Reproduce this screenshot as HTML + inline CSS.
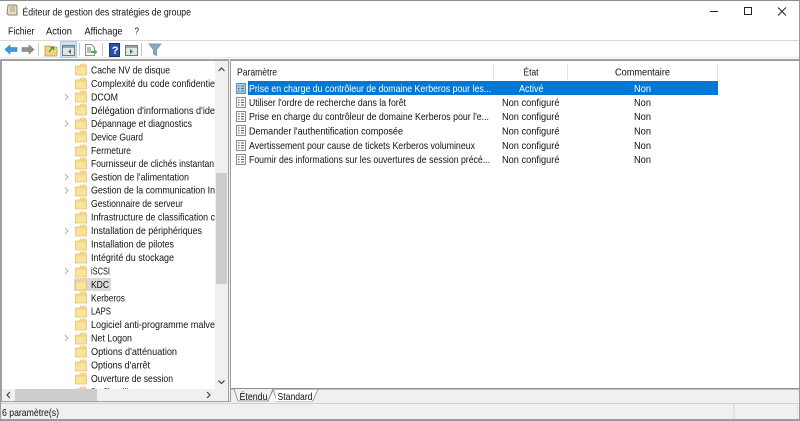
<!DOCTYPE html>
<html><head><meta charset="utf-8"><style>
html,body{margin:0;padding:0;width:800px;height:421px;overflow:hidden;background:#f0f0f0}
svg{display:block}
text{font-family:"Liberation Sans",sans-serif;font-size:10.2px;fill:#111}
</style></head><body>
<svg width="800" height="421" viewBox="0 0 800 421" xmlns="http://www.w3.org/2000/svg">
<defs>
<g id="f"><path d="M5 2.500l1-1.500h4.500l.5 1.500v1H5z" fill="#f9e4a8" stroke="#e3c679" stroke-width=".8"/><rect x="0.500" y="3" width="11" height="9" fill="#f8dc8c" stroke="#e3c679" stroke-width=".8"/><rect x="1.500" y="5" width="9" height="6.500" fill="#fbe39c"/></g>
<g id="d"><rect x="0.500" y="0.500" width="9" height="10" fill="#fff" stroke="#8a8a8a"/><path d="M2 3h1.500M2 5.500h1.500M2 8h1.500M5 3h3M5 5.500h3M5 8h3" stroke="#555" stroke-width="1"/></g>
<path id="c" d="M0 0l3 3l-3 3" fill="none" stroke="#b0b0b0" stroke-width="1"/>
<clipPath id="t"><rect x="2" y="62" width="213" height="327"/></clipPath>
</defs>
<rect width="800" height="421" fill="#fff"/>
<rect x="0" y="0" width="800" height="1" fill="#8c8c8c"/>

<!-- title -->
<path d="M8 5h8l1 1v9H9l-2-1z" fill="#e8dfc4" stroke="#8a8370"/><path d="M10 7h5M10 9h5M10 11h5" stroke="#a89f80"/>
<text x="22.500" y="15.500" textLength="168.500" lengthAdjust="spacingAndGlyphs">Éditeur de gestion des stratégies de groupe</text>
<rect x="710" y="11" width="8" height="1" fill="#222"/>
<rect x="744.500" y="7.500" width="7" height="7" fill="none" stroke="#222"/>
<path d="M778 7.500l8 8M786 7.500l-8 8" stroke="#222" stroke-width="1"/>

<!-- menu -->
<text x="8" y="34.500" textLength="26.500" lengthAdjust="spacingAndGlyphs">Fichier</text>
<text x="46" y="34.500" textLength="26" lengthAdjust="spacingAndGlyphs">Action</text>
<text x="84.500" y="34.500" textLength="38" lengthAdjust="spacingAndGlyphs">Affichage</text>
<text x="134.500" y="34.500" textLength="4.500" lengthAdjust="spacingAndGlyphs">?</text>

<!-- toolbar -->
<rect x="0" y="40" width="800" height="1" fill="#d9d9d9"/>
<rect x="0" y="41" width="800" height="18" fill="#fff"/>
<rect x="0" y="57" width="800" height="1" fill="#e8e8e8"/>
<rect x="0" y="59" width="800" height="2" fill="#a0a0a0"/>
<path d="M5 49.500l5-4.500v2.500h7v4h-7v2.500z" fill="#3f9ae0" stroke="#2277c0" stroke-width=".6"/>
<path d="M34 49.500l-5-4.500v2.500h-7v4h7v2.500z" fill="#8e8e8e" stroke="#777" stroke-width=".6"/>
<rect x="38" y="43" width="1" height="13" fill="#c8c8c8"/>
<path d="M45 46h5l1 1h6v9H45z" fill="#f3d27c" stroke="#b89a50" stroke-width=".8"/>
<path d="M49 52l4-5m-2.500 0h3v3" fill="none" stroke="#2f9a2f" stroke-width="1.300"/>
<rect x="60.500" y="41.500" width="16" height="16" fill="#cce4f7" stroke="#a8d0ee"/>
<rect x="62.500" y="45.500" width="12" height="10" fill="#e6e6e6" stroke="#777"/>
<rect x="63" y="46" width="11" height="2" fill="#90a8bc"/>
<path d="M71 49v5l-3-2.500z" fill="#2d8a3e"/>
<rect x="79" y="43" width="1" height="13" fill="#c8c8c8"/>
<path d="M85.500 44.500h6l3 3v8h-9z" fill="#fafafa" stroke="#909090"/>
<path d="M87 48h4M87 50h4M87 52h4" stroke="#777"/>
<path d="M91 51h3v-2l3.500 3-3.500 3v-2h-3z" fill="#4cb04c"/>
<rect x="102" y="43" width="1" height="13" fill="#c8c8c8"/>
<rect x="109.500" y="43.500" width="10" height="13" fill="#2a4fa8" stroke="#1c3478"/>
<text x="111.700" y="54" style="font-size:11px;font-weight:bold;fill:#fff">?</text>
<rect x="125.500" y="45.500" width="12" height="10" fill="#e6e6e6" stroke="#777"/>
<rect x="126" y="46" width="11" height="2" fill="#90a8bc"/>
<path d="M130 49v5l3-2.500z" fill="#2d8a3e"/>
<rect x="141" y="43" width="1" height="13" fill="#c8c8c8"/>
<path d="M149 44h12l-4.500 5.500v6l-3-1.500v-4.500z" fill="#8ea9bd" stroke="#6b8698" stroke-width=".7"/>

<!-- left panel -->
<rect x="0" y="61" width="2" height="343" fill="#a0a0a0"/>
<rect x="2" y="61" width="226" height="340" fill="#fff"/>
<rect x="228" y="59" width="3" height="345" fill="#f0f0f0"/>
<rect x="228" y="59" width="1" height="345" fill="#a0a0a0"/>
<rect x="230" y="59" width="1" height="345" fill="#a0a0a0"/>

<rect x="74" y="278" width="37" height="13" fill="#d9d9d9"/>

<g clip-path="url(#t)">
<use href="#f" x="75" y="63"/><text x="91" y="73.500" textLength="79" lengthAdjust="spacingAndGlyphs">Cache NV de disque</text>
<use href="#f" x="75" y="77"/><text x="91" y="87" textLength="124" lengthAdjust="spacingAndGlyphs">Complexité du code confidentie</text>
<use href="#f" x="75" y="90"/><text x="91" y="100.500" textLength="27" lengthAdjust="spacingAndGlyphs">DCOM</text>
<use href="#f" x="75" y="103"/><text x="91" y="114" textLength="124" lengthAdjust="spacingAndGlyphs">Délégation d'informations d'ide</text>
<use href="#f" x="75" y="117"/><text x="91" y="127" textLength="101" lengthAdjust="spacingAndGlyphs">Dépannage et diagnostics</text>
<use href="#f" x="75" y="130"/><text x="91" y="140.500" textLength="52" lengthAdjust="spacingAndGlyphs">Device Guard</text>
<use href="#f" x="75" y="144"/><text x="91" y="154" textLength="40" lengthAdjust="spacingAndGlyphs">Fermeture</text>
<use href="#f" x="75" y="157"/><text x="91" y="167" textLength="123" lengthAdjust="spacingAndGlyphs">Fournisseur de clichés instantan</text>
<use href="#f" x="75" y="170"/><text x="91" y="180.500" textLength="98" lengthAdjust="spacingAndGlyphs">Gestion de l'alimentation</text>
<use href="#f" x="75" y="184"/><text x="91" y="193.500" textLength="124" lengthAdjust="spacingAndGlyphs">Gestion de la communication In</text>
<use href="#f" x="75" y="197"/><text x="91" y="207" textLength="92" lengthAdjust="spacingAndGlyphs">Gestionnaire de serveur</text>
<use href="#f" x="75" y="211"/><text x="91" y="220.500" textLength="124" lengthAdjust="spacingAndGlyphs">Infrastructure de classification c</text>
<use href="#f" x="75" y="224"/><text x="91" y="234" textLength="111" lengthAdjust="spacingAndGlyphs">Installation de périphériques</text>
<use href="#f" x="75" y="238"/><text x="91" y="247.500" textLength="83" lengthAdjust="spacingAndGlyphs">Installation de pilotes</text>
<use href="#f" x="75" y="251"/><text x="91" y="261" textLength="83" lengthAdjust="spacingAndGlyphs">Intégrité du stockage</text>
<use href="#f" x="75" y="265"/><text x="91" y="274.500" textLength="19" lengthAdjust="spacingAndGlyphs">iSCSI</text>
<use href="#f" x="75" y="278"/><text x="91" y="288" textLength="18" lengthAdjust="spacingAndGlyphs">KDC</text>
<use href="#f" x="75" y="291"/><text x="91" y="301.500" textLength="34" lengthAdjust="spacingAndGlyphs">Kerberos</text>
<use href="#f" x="75" y="305"/><text x="91" y="314.500" textLength="20" lengthAdjust="spacingAndGlyphs">LAPS</text>
<use href="#f" x="75" y="318"/><text x="91" y="328" textLength="124" lengthAdjust="spacingAndGlyphs">Logiciel anti-programme malve</text>
<use href="#f" x="75" y="332"/><text x="91" y="341.500" textLength="41" lengthAdjust="spacingAndGlyphs">Net Logon</text>
<use href="#f" x="75" y="345"/><text x="91" y="355" textLength="86" lengthAdjust="spacingAndGlyphs">Options d'atténuation</text>
<use href="#f" x="75" y="359"/><text x="91" y="368.500" textLength="59" lengthAdjust="spacingAndGlyphs">Options d'arrêt</text>
<use href="#f" x="75" y="372"/><text x="91" y="382" textLength="82" lengthAdjust="spacingAndGlyphs">Ouverture de session</text>
<use href="#f" x="75" y="386"/><text x="91" y="395.500" textLength="60" lengthAdjust="spacingAndGlyphs">Profils utilisateur</text>
</g>
<use href="#c" x="65" y="94"/><use href="#c" x="65" y="120.500"/><use href="#c" x="65" y="174"/><use href="#c" x="65" y="187.500"/><use href="#c" x="65" y="228"/><use href="#c" x="65" y="268"/><use href="#c" x="65" y="335"/>

<!-- vertical scroll -->
<rect x="215" y="61" width="13" height="328" fill="#f0f0f0"/>
<path d="M218.500 71l3-3 3 3" fill="none" stroke="#444" stroke-width="1.200"/>
<path d="M218.500 380.500l3 3 3-3" fill="none" stroke="#444" stroke-width="1.200"/>
<rect x="216" y="173" width="11" height="111" fill="#cdcdcd"/>
<!-- horizontal scroll -->
<rect x="2" y="389" width="226" height="12" fill="#f0f0f0"/>
<path d="M10 392l-3 3 3 3" fill="none" stroke="#444" stroke-width="1.200"/>
<path d="M207 392l3 3-3 3" fill="none" stroke="#444" stroke-width="1.200"/>
<rect x="15" y="389" width="82" height="12" fill="#cdcdcd"/>

<!-- right panel -->
<rect x="231" y="61" width="569" height="328" fill="#fff"/>
<rect x="493" y="64" width="1" height="16" fill="#e5e5e5"/>
<rect x="567" y="64" width="1" height="16" fill="#e5e5e5"/>
<rect x="717" y="64" width="1" height="16" fill="#e5e5e5"/>
<text x="237" y="75.500" textLength="40" lengthAdjust="spacingAndGlyphs">Paramètre</text>
<text x="523.500" y="75.500" textLength="15" lengthAdjust="spacingAndGlyphs">État</text>
<text x="615" y="75.500" textLength="55" lengthAdjust="spacingAndGlyphs">Commentaire</text>

<rect x="248" y="81" width="470" height="14" fill="#0078d7"/>
<rect x="236" y="83" width="10" height="11" fill="#3f8fd3"/>
<use href="#d" x="236" y="83" opacity=".55"/>
<text x="249" y="92" textLength="242" lengthAdjust="spacingAndGlyphs" style="fill:#fff">Prise en charge du contrôleur de domaine Kerberos pour les...</text>
<text x="519" y="92" textLength="24.500" lengthAdjust="spacingAndGlyphs" style="fill:#fff">Activé</text>
<text x="634" y="92" textLength="17" lengthAdjust="spacingAndGlyphs" style="fill:#fff">Non</text>

<use href="#d" x="236" y="97"/>
<text x="249" y="106" textLength="157" lengthAdjust="spacingAndGlyphs">Utiliser l'ordre de recherche dans la forêt</text>
<text x="502" y="106" textLength="57.500" lengthAdjust="spacingAndGlyphs">Non configuré</text>
<text x="634" y="106" textLength="17" lengthAdjust="spacingAndGlyphs">Non</text>

<use href="#d" x="236" y="111"/>
<text x="249" y="120" textLength="240" lengthAdjust="spacingAndGlyphs">Prise en charge du contrôleur de domaine Kerberos pour l'e...</text>
<text x="502" y="120" textLength="57.500" lengthAdjust="spacingAndGlyphs">Non configuré</text>
<text x="634" y="120" textLength="17" lengthAdjust="spacingAndGlyphs">Non</text>

<use href="#d" x="236" y="125"/>
<text x="249" y="134.500" textLength="154" lengthAdjust="spacingAndGlyphs">Demander l'authentification composée</text>
<text x="502" y="134.500" textLength="57.500" lengthAdjust="spacingAndGlyphs">Non configuré</text>
<text x="634" y="134.500" textLength="17" lengthAdjust="spacingAndGlyphs">Non</text>

<use href="#d" x="236" y="140"/>
<text x="249" y="149" textLength="226" lengthAdjust="spacingAndGlyphs">Avertissement pour cause de tickets Kerberos volumineux</text>
<text x="502" y="149" textLength="57.500" lengthAdjust="spacingAndGlyphs">Non configuré</text>
<text x="634" y="149" textLength="17" lengthAdjust="spacingAndGlyphs">Non</text>

<use href="#d" x="236" y="154"/>
<text x="249" y="163" textLength="241" lengthAdjust="spacingAndGlyphs">Fournir des informations sur les ouvertures de session précé...</text>
<text x="502" y="163" textLength="57.500" lengthAdjust="spacingAndGlyphs">Non configuré</text>
<text x="634" y="163" textLength="17" lengthAdjust="spacingAndGlyphs">Non</text>

<!-- tabs -->
<rect x="231" y="389" width="569" height="15" fill="#f0f0f0"/>
<rect x="231" y="388" width="569" height="1.500" fill="#8f8f8f"/>
<path d="M234 389l4 12h30l5-12" fill="#f0f0f0" stroke="#888" stroke-width=".8"/>
<path d="M269 401h-1l5-11 4 11h36l5-12" fill="#fff" stroke="#888" stroke-width=".8"/>
<rect x="276" y="390" width="36" height="11" fill="#fff"/>
<text x="239.500" y="400" textLength="28" lengthAdjust="spacingAndGlyphs">Étendu</text>
<text x="277.500" y="400" textLength="35" lengthAdjust="spacingAndGlyphs">Standard</text>

<!-- status -->
<rect x="0" y="401" width="231" height="1" fill="#a0a0a0"/>
<rect x="0" y="402" width="800" height="19" fill="#f0f0f0"/>
<rect x="0" y="403" width="800" height="1" fill="#d0d0d0"/>
<rect x="0" y="404" width="800" height="15" fill="#f0f0f0"/>
<text x="2" y="416" textLength="57" lengthAdjust="spacingAndGlyphs">6 paramètre(s)</text>
<rect x="733" y="404" width="2" height="15" fill="#e2e2e2"/>
<rect x="797" y="404" width="1" height="15" fill="#e2e2e2"/>
<rect x="0" y="419" width="800" height="2" fill="#9a9a9a"/>
<rect x="0" y="402" width="1" height="19" fill="#9a9a9a"/>
<rect x="799" y="0" width="1" height="421" fill="#9a9a9a"/>
</svg>
</body></html>
